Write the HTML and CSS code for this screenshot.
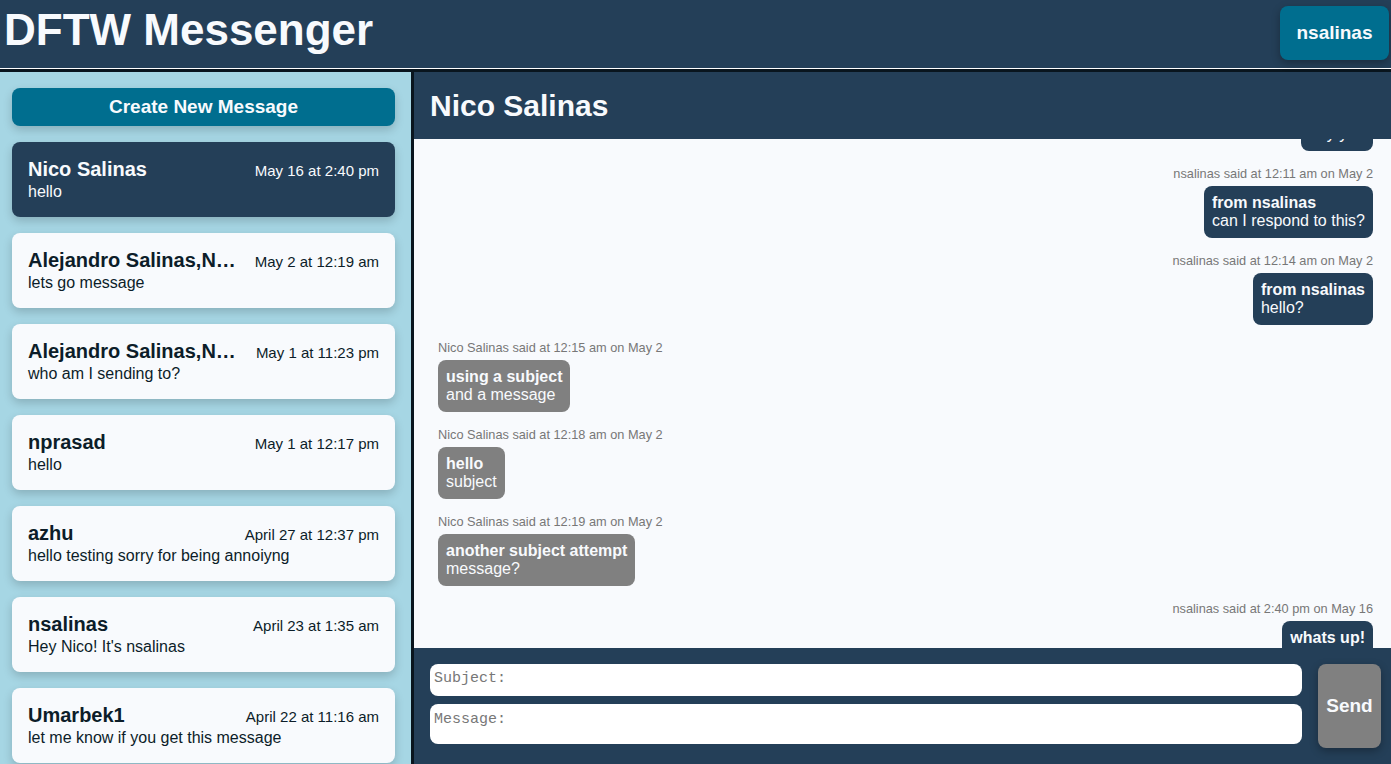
FILE: index.html
```html
<!DOCTYPE html>
<html lang="en">
<head>
<meta charset="utf-8">
<title>DFTW Messenger</title>
<link rel="stylesheet" href="styles.css">
</head>
<body>
<header class="topbar">
  <h1 class="brand">DFTW Messenger</h1>
  <button class="user-btn">nsalinas</button>
</header>
<main class="app">
  <aside class="sidebar">
    <button class="create-btn">Create New Message</button>
    <div class="card active">
      <div class="card-row"><span class="card-name">Nico Salinas</span><span class="card-date">May 16 at 2:40 pm</span></div>
      <div class="card-preview">hello</div>
    </div>
    <div class="card">
      <div class="card-row"><span class="card-name">Alejandro Salinas,Nico Salinas</span><span class="card-date">May 2 at 12:19 am</span></div>
      <div class="card-preview">lets go message</div>
    </div>
    <div class="card">
      <div class="card-row"><span class="card-name">Alejandro Salinas,Nico Salinas</span><span class="card-date">May 1 at 11:23 pm</span></div>
      <div class="card-preview">who am I sending to?</div>
    </div>
    <div class="card">
      <div class="card-row"><span class="card-name">nprasad</span><span class="card-date">May 1 at 12:17 pm</span></div>
      <div class="card-preview">hello</div>
    </div>
    <div class="card">
      <div class="card-row"><span class="card-name">azhu</span><span class="card-date">April 27 at 12:37 pm</span></div>
      <div class="card-preview">hello testing sorry for being annoiyng</div>
    </div>
    <div class="card">
      <div class="card-row"><span class="card-name">nsalinas</span><span class="card-date">April 23 at 1:35 am</span></div>
      <div class="card-preview">Hey Nico! It's nsalinas</div>
    </div>
    <div class="card">
      <div class="card-row"><span class="card-name">Umarbek1</span><span class="card-date">April 22 at 11:16 am</span></div>
      <div class="card-preview">let me know if you get this message</div>
    </div>
  </aside>
  <section class="chat">
    <div class="chat-head">Nico Salinas</div>
    <div class="messages">
      <div class="msg-list">
        <div class="msg mine">
          <div class="meta">nsalinas said at 12:10 am on May 2</div>
          <div class="bubble"><span class="subj">testing</span><span class="body">hey you</span></div>
        </div>
        <div class="msg mine">
          <div class="meta">nsalinas said at 12:11 am on May 2</div>
          <div class="bubble"><span class="subj">from nsalinas</span><span class="body">can I respond to this?</span></div>
        </div>
        <div class="msg mine">
          <div class="meta">nsalinas said at 12:14 am on May 2</div>
          <div class="bubble"><span class="subj">from nsalinas</span><span class="body">hello?</span></div>
        </div>
        <div class="msg theirs">
          <div class="meta">Nico Salinas said at 12:15 am on May 2</div>
          <div class="bubble"><span class="subj">using a subject</span><span class="body">and a message</span></div>
        </div>
        <div class="msg theirs">
          <div class="meta">Nico Salinas said at 12:18 am on May 2</div>
          <div class="bubble"><span class="subj">hello</span><span class="body">subject</span></div>
        </div>
        <div class="msg theirs">
          <div class="meta">Nico Salinas said at 12:19 am on May 2</div>
          <div class="bubble"><span class="subj">another subject attempt</span><span class="body">message?</span></div>
        </div>
        <div class="msg mine">
          <div class="meta">nsalinas said at 2:40 pm on May 16</div>
          <div class="bubble"><span class="subj">whats up!</span><span class="body">hello</span></div>
        </div>
      </div>
    </div>
    <form class="composer">
      <div class="fields">
        <input class="field subject" type="text" placeholder="Subject:">
        <textarea class="field message" placeholder="Message:"></textarea>
      </div>
      <button class="send-btn" type="button">Send</button>
    </form>
  </section>
</main>
</body>
</html>
```

FILE: styles.css
```css
* { box-sizing: border-box; }

html, body {
  margin: 0;
  padding: 0;
  height: 100%;
  overflow: hidden;
}

body {
  font-family: "Liberation Sans", Arial, Helvetica, sans-serif;
  background: #243f58;
}

.topbar {
  height: 69px;
  background: #243f58;
  border-bottom: 1px solid #ffffff;
  display: flex;
  justify-content: space-between;
  align-items: flex-start;
}

.brand {
  margin: 0;
  padding-left: 4px;
  font-size: 44px;
  line-height: 60px;
  font-weight: bold;
  color: #f8fafd;
}

.user-btn {
  margin: 6px 2px 0 0;
  width: 109px;
  height: 54px;
  border: none;
  border-radius: 8px;
  background: #006e8f;
  color: #f8fafd;
  font-family: inherit;
  font-size: 19px;
  font-weight: bold;
  box-shadow: 0 3px 8px rgba(0, 0, 0, 0.3);
}

.app {
  display: grid;
  grid-template-columns: 414px 1fr;
  height: 695px;
  border-top: 3px solid #09151e;
}

.sidebar {
  background: #a6d6e4;
  border-right: 3px solid #09151e;
  padding: 16px 16px 0 12px;
  overflow: hidden;
  display: flex;
  flex-direction: column;
  gap: 16px;
}

.create-btn {
  flex: none;
  height: 38px;
  border: none;
  border-radius: 8px;
  background: #006e8f;
  color: #f8fafd;
  font-family: inherit;
  font-size: 19px;
  font-weight: bold;
  box-shadow: 0 4px 10px rgba(0, 0, 0, 0.18);
}

.card {
  flex: none;
  height: 75px;
  padding: 16px 16px;
  border-radius: 8px;
  background: #f8fafd;
  color: #0c1d29;
  box-shadow: 0 4px 10px rgba(0, 0, 0, 0.18);
}

.card.active {
  background: #243f58;
  color: #f8fafd;
}

.card-row {
  display: flex;
  justify-content: space-between;
  align-items: baseline;
  height: 25px;
}

.card-name {
  font-size: 20px;
  font-weight: bold;
  line-height: 23px;
  max-width: 60%;
  white-space: nowrap;
  overflow: hidden;
  text-overflow: ellipsis;
}

.card-date {
  font-size: 15px;
  white-space: nowrap;
}

.card-preview {
  font-size: 16px;
  line-height: 18px;
}

.chat {
  display: flex;
  flex-direction: column;
  min-width: 0;
  height: 692px;
}

.chat-head {
  flex: none;
  height: 67px;
  display: flex;
  align-items: center;
  padding-left: 16px;
  background: #243f58;
  color: #f8fafd;
  font-size: 30px;
  font-weight: bold;
}

.messages {
  flex: 1;
  min-height: 0;
  overflow: hidden;
  background: #f8fafd;
  padding: 0 18px 0 24px;
}

.msg-list {
  display: flex;
  flex-direction: column;
  gap: 16px;
  margin-top: -59px;
}

.msg {
  display: flex;
  flex-direction: column;
  gap: 5px;
}

.msg.mine { align-items: flex-end; }
.msg.theirs { align-items: flex-start; }

.meta {
  font-size: 12.75px;
  line-height: 14px;
  color: #777777;
}

.bubble {
  padding: 8px;
  border-radius: 8px;
  color: #f8fafd;
  font-size: 16px;
  line-height: 18px;
}

.mine .bubble { background: #243f58; }
.theirs .bubble { background: #808080; }

.subj {
  display: block;
  font-weight: bold;
}

.body { display: block; }

.composer {
  flex: none;
  margin: 0;
  height: 116px;
  display: flex;
  align-items: flex-start;
  gap: 16px;
  padding: 16px 10px 16px 16px;
  background: #243f58;
}

.fields {
  flex: 1;
  display: flex;
  flex-direction: column;
  gap: 8px;
}

.field {
  display: block;
  width: 100%;
  border: none;
  border-radius: 8px;
  background: #ffffff;
  font-family: "Liberation Mono", "Courier New", monospace;
  font-size: 15px;
  padding: 4px;
  resize: none;
  outline: none;
}

.field::placeholder { color: #777777; }

.subject { height: 32px; padding: 0 4px 3px; }
.message { height: 40px; padding: 7px 4px 3px; }

.send-btn {
  width: 63px;
  height: 84px;
  border: none;
  border-radius: 8px;
  background: #808080;
  color: #f8fafd;
  font-family: inherit;
  font-size: 19px;
  font-weight: bold;
  box-shadow: 0 3px 8px rgba(0, 0, 0, 0.3);
}
```
